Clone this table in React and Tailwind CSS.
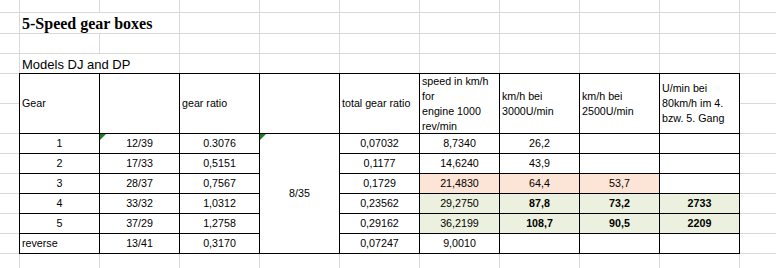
import React from "react";

const emptyRow = (key, n = 11) =>
  Array.from({ length: n }, (_, i) => <div key={`${key}-${i}`} className="bg-white" />);

function Tri() {
  return (
    <svg className="absolute left-0 top-0" width="6" height="6" viewBox="0 0 6 6">
      <polygon points="0,0 6,0 0,6" fill="#1d7d24" />
    </svg>
  );
}

const headers = [
  ["Gear"],
  [],
  ["gear ratio"],
  [],
  ["total gear ratio"],
  ["speed in km/h", "for", "engine 1000", "rev/min"],
  ["km/h bei", "3000U/min"],
  ["km/h bei", "2500U/min"],
  ["U/min bei", "80km/h im 4.", "bzw. 5. Gang"],
];

// gear, teeth, ratio, total, speed, 3000, 2500, U/min, fill
const rows = [
  ["1", "12/39", "0.3076", "0,07032", "8,7340", "26,2", "", "", ""],
  ["2", "17/33", "0,5151", "0,1177", "14,6240", "43,9", "", "", ""],
  ["3", "28/37", "0,7567", "0,1729", "21,4830", "64,4", "53,7", "", "peach"],
  ["4", "33/32", "1,0312", "0,23562", "29,2750", "87,8", "73,2", "2733", "green"],
  ["5", "37/29", "1,2758", "0,29162", "36,2199", "108,7", "90,5", "2209", "green"],
  ["reverse", "13/41", "0,3170", "0,07247", "9,0010", "", "", "", ""],
];

const box = "outline-1 outline-solid outline-black";

export default function App() {
  return (
    <div className="w-[776px] h-[268px] overflow-hidden bg-white">
      <div
        className="grid grid-cols-[19px_repeat(9,79px)_1fr] grid-rows-[12px_20px_19px_19px_29px_29px_19px_19px_19px_19px_19px_19px_19px] gap-px bg-[#d9d9d9] text-black"
        style={{ fontFamily: '"Liberation Sans", Arial, sans-serif' }}
      >
        {emptyRow("r1")}

        <div className="bg-white" />
        <div className="col-span-2 bg-white flex items-end pl-[2px]">
          <span className="font-bold text-[16px] leading-[18px] whitespace-nowrap" style={{ fontFamily: '"Liberation Serif", "Times New Roman", serif' }}>
            5-Speed gear boxes
          </span>
        </div>
        {emptyRow("r2", 8)}

        {emptyRow("r3")}

        <div className="bg-white" />
        <div className="col-span-2 bg-white flex items-end pl-[2px] pb-[1px]">
          <span className="text-[13px] leading-[15px] whitespace-nowrap">Models DJ and DP</span>
        </div>
        {emptyRow("r4", 8)}

        <div className="bg-white" />
        {headers.map((lines, i) => (
          <div key={`h${i}`} className={`row-span-2 bg-white ${box} flex flex-col justify-center pl-[2px] text-[10.7px] leading-[15px]`}>
            {lines.map((l) => (
              <span key={l} className="whitespace-nowrap">{l}</span>
            ))}
          </div>
        ))}
        <div className="bg-white" />
        <div className="bg-white" />
        <div className="bg-white" />

        {rows.map((r, ri) => {
          const fill = r[8];
          const bg6 = fill === "peach" ? "bg-[#fce4d6]" : fill === "green" ? "bg-[#ebf1de]" : "bg-white";
          const bg9 = fill === "green" ? "bg-[#ebf1de]" : "bg-white";
          const bold = fill === "green" ? "font-bold" : "";
          const cell = `${box} flex items-center justify-center text-[10.7px]`;
          return (
            <React.Fragment key={`d${ri}`}>
              <div className="bg-white" />
              <div className={`bg-white ${box} flex items-center text-[10.7px] ${r[0] === "reverse" ? "justify-start pl-[2px]" : "justify-center"}`}>
                {r[0]}
              </div>
              <div className={`bg-white ${cell} relative`}>
                {ri === 0 && <Tri />}
                {r[1]}
              </div>
              <div className={`bg-white ${cell}`}>{r[2]}</div>
              {ri === 0 && (
                <div className={`row-span-6 bg-white ${cell} relative`}>
                  <Tri />
                  8/35
                </div>
              )}
              <div className={`bg-white ${cell}`}>{r[3]}</div>
              <div className={`${bg6} ${cell}`}>{r[4]}</div>
              <div className={`${bg6} ${cell} ${bold}`}>{r[5]}</div>
              <div className={`${bg6} ${cell} ${bold}`}>{r[6]}</div>
              <div className={`${bg9} ${cell} ${bold}`}>{r[7]}</div>
              <div className="bg-white" />
            </React.Fragment>
          );
        })}

        {emptyRow("r13")}
      </div>
    </div>
  );
}
